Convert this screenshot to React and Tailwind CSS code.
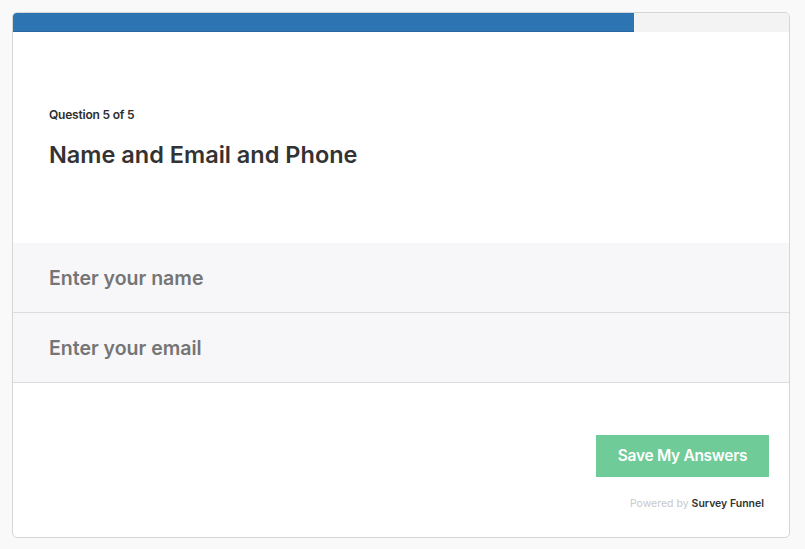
import { useState } from "react";

const App = () => {
  const [name, setName] = useState("");
  const [email, setEmail] = useState("");

  return (
    <div
      className="min-h-screen bg-[#f9f9f9] pt-[12px] pl-[12px]"
      style={{ fontFamily: "Inter, 'Open Sans', sans-serif" }}
    >
      <div className="w-[778px] h-[526px] bg-white border border-[#d6d6d6] rounded-[5px] overflow-hidden flex flex-col">
        {/* Progress */}
        <div className="h-[19px] bg-[#f3f3f3] flex shrink-0">
          <div className="w-[621px] h-full bg-[#2d74b3] border-b border-[#2766a0]" />
        </div>

        {/* Question header */}
        <div className="h-[211px] shrink-0 pl-[36px] pt-[76px]">
          <p className="text-[12px] leading-[14px] font-semibold text-[#2e2e2e] tracking-[-0.2px]">
            Question 5 of 5
          </p>
          <h1 className="mt-[19px] text-[23.5px] leading-[28px] font-semibold text-[#333] tracking-[0px]">
            Name and Email and Phone
          </h1>
        </div>

        {/* Inputs */}
        <div className="flex flex-col">
          <input
            type="text"
            value={name}
            onChange={(e) => setName(e.target.value)}
            placeholder="Enter your name"
            className="h-[70px] bg-[#f7f7f9] border-b border-[#dcdcdc] pl-[36px] text-[19.5px] font-semibold text-[#333] placeholder-[#757575] outline-none"
          />
          <input
            type="text"
            value={email}
            onChange={(e) => setEmail(e.target.value)}
            placeholder="Enter your email"
            className="h-[70px] bg-[#f7f7f9] border-b border-[#dcdcdc] pl-[36px] text-[19.5px] font-semibold text-[#333] placeholder-[#757575] outline-none"
          />
        </div>

        {/* Footer */}
        <div className="flex flex-col items-end pr-[20px] pt-[52px]">
          <button className="w-[173px] h-[42px] bg-[#6fcb97] text-white text-[15.5px] font-semibold tracking-[-0.3px]">
            Save My Answers
          </button>
          <p className="mt-[21px] mr-[5px] text-[10.5px] leading-[12px]">
            <span className="text-[#c8c8c8]">Powered by </span>
            <span className="text-[#333] font-semibold">Survey Funnel</span>
          </p>
        </div>
      </div>
    </div>
  );
};

export default App;
